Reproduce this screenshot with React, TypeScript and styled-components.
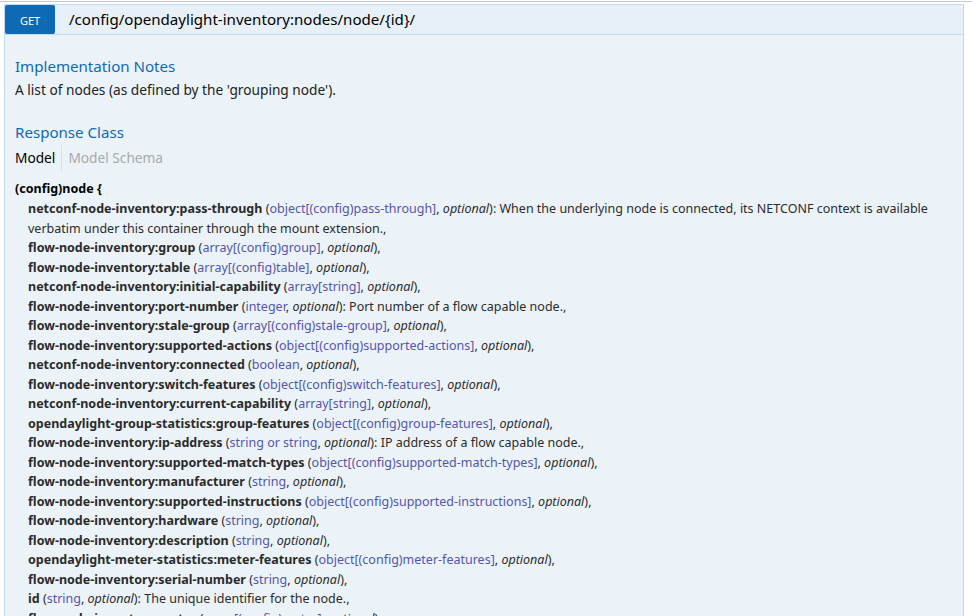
import React from "react";
import styled, { createGlobalStyle } from "styled-components";

const Global = createGlobalStyle`
  html, body { margin: 0; padding: 0; background: #fff; }
  body { font-family: "Noto Sans", "Open Sans", sans-serif; color: #333; }
`;

const Page = styled.div`
  margin-top: 1px;
  border-top: 1px solid #c8c8c8;
  padding: 2px 0 0 4px;
  height: 612px;
  overflow: hidden;
`;

const Operation = styled.div`
  width: 960px;
`;

const Heading = styled.div`
  display: flex;
  align-items: center;
  height: 29px;
  background: #e7f0f7;
  border: 1px solid #c3d9ec;
`;

const Method = styled.span`
  display: flex;
  align-items: center;
  justify-content: center;
  align-self: stretch;
  width: 50px;
  background: #0f6ab4;
  color: #fff;
  font-size: 11px;
  border-radius: 2px;
  text-transform: uppercase;
  padding-top: 1px;
  box-sizing: border-box;
`;

const Path = styled.span`
  margin-left: 14px;
  font-size: 15.1px;
  color: #000;
  margin-top: -2px;
`;

const Content = styled.div`
  background: #ebf3f9;
  border: 1px solid #c3d9ec;
  border-top: none;
  padding: 22px 10px 40px 10px;
`;

const SectionTitle = styled.h4`
  margin: 0;
  font-size: 15.1px;
  line-height: 19px;
  font-weight: normal;
  color: #0f6ab4;
  & + p { margin-top: 4px; }
`;

const Note = styled.p`
  margin: 0 0 23px 0;
  font-size: 13.7px;
  line-height: 19.5px;
  color: #222;
`;

const Tabs = styled.div`
  display: flex;
  margin-top: 3px;
  font-size: 13.7px;
`;

const Tab = styled.span<{ $active?: boolean; $divided?: boolean }>`
  padding: 3px 6px 3px 0;
  line-height: 20px;
  color: ${(p) => (p.$active ? "#000" : "#aaa")};
  ${(p) => (p.$divided ? "border-left: 1px solid #ddd; padding-left: 6px;" : "")}
`;

const Signature = styled.div`
  margin-top: 8px;
  font-size: 12.5px;
  line-height: 19.5px;
  color: #2b2b2b;
`;

const ModelTitle = styled.div`
  font-weight: bold;
  color: #000;
  margin-bottom: 1px;
`;

const Prop = styled.div`
  padding-left: 13px;
`;

const PropName = styled.span`
  font-weight: bold;
`;

const PropType = styled.span`
  color: #55a;
`;

const PropOpt = styled.span`
  font-style: italic;
`;

type P = { name: string; type: string; desc?: string };

const props: P[] = [
  { name: "netconf-node-inventory:pass-through", type: "object[(config)pass-through]", desc: "When the underlying node is connected, its NETCONF context is available verbatim under this container through the mount extension." },
  { name: "flow-node-inventory:group", type: "array[(config)group]" },
  { name: "flow-node-inventory:table", type: "array[(config)table]" },
  { name: "netconf-node-inventory:initial-capability", type: "array[string]" },
  { name: "flow-node-inventory:port-number", type: "integer", desc: "Port number of a flow capable node." },
  { name: "flow-node-inventory:stale-group", type: "array[(config)stale-group]" },
  { name: "flow-node-inventory:supported-actions", type: "object[(config)supported-actions]" },
  { name: "netconf-node-inventory:connected", type: "boolean" },
  { name: "flow-node-inventory:switch-features", type: "object[(config)switch-features]" },
  { name: "netconf-node-inventory:current-capability", type: "array[string]" },
  { name: "opendaylight-group-statistics:group-features", type: "object[(config)group-features]" },
  { name: "flow-node-inventory:ip-address", type: "string or string", desc: "IP address of a flow capable node." },
  { name: "flow-node-inventory:supported-match-types", type: "object[(config)supported-match-types]" },
  { name: "flow-node-inventory:manufacturer", type: "string" },
  { name: "flow-node-inventory:supported-instructions", type: "object[(config)supported-instructions]" },
  { name: "flow-node-inventory:hardware", type: "string" },
  { name: "flow-node-inventory:description", type: "string" },
  { name: "opendaylight-meter-statistics:meter-features", type: "object[(config)meter-features]" },
  { name: "flow-node-inventory:serial-number", type: "string" },
  { name: "id", type: "string", desc: "The unique identifier for the node." },
  { name: "flow-node-inventory:meter", type: "array[(config)meter]" },
  { name: "flow-node-inventory:software", type: "string" },
];

export default function App() {
  return (
    <>
      <Global />
      <Page>
        <Operation>
          <Heading>
            <Method>GET</Method>
            <Path>/config/opendaylight-inventory:nodes/node/&#123;id&#125;/</Path>
          </Heading>
          <Content>
            <SectionTitle>Implementation Notes</SectionTitle>
            <Note>A list of nodes (as defined by the 'grouping node').</Note>
            <SectionTitle>Response Class</SectionTitle>
            <Tabs>
              <Tab $active>Model</Tab>
              <Tab $divided>Model Schema</Tab>
            </Tabs>
            <Signature>
              <ModelTitle>(config)node &#123;</ModelTitle>
              {props.map((p, i) => (
                <Prop key={i}>
                  <PropName>{p.name}</PropName> (<PropType>{p.type}</PropType>, <PropOpt>optional</PropOpt>)
                  {p.desc ? `: ${p.desc},` : ","}
                </Prop>
              ))}
            </Signature>
          </Content>
        </Operation>
      </Page>
    </>
  );
}
